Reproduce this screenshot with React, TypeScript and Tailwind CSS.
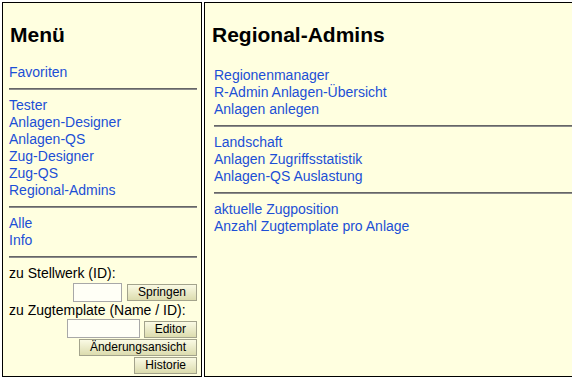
const leftGroups = [
  ['Favoriten'],
  ['Tester', 'Anlagen-Designer', 'Anlagen-QS', 'Zug-Designer', 'Zug-QS', 'Regional-Admins'],
  ['Alle', 'Info'],
];

const rightGroups = [
  ['Regionenmanager', 'R-Admin Anlagen-Übersicht', 'Anlagen anlegen'],
  ['Landschaft', 'Anlagen Zugriffsstatistik', 'Anlagen-QS Auslastung'],
  ['aktuelle Zugposition', 'Anzahl Zugtemplate pro Anlage'],
];

function Rule() {
  return <hr className="my-[7px] h-0 border-0 border-t border-b border-t-[#666] border-b-[#8c8c8c]" />;
}

function LinkGroup({ links }: { links: string[] }) {
  return (
    <div className="flex flex-col">
      {links.map((l) => (
        <a key={l} href="#" className="block h-[17px] leading-[17px] text-[#1c4fd6] no-underline">
          {l}
        </a>
      ))}
    </div>
  );
}

function Btn({ label }: { label: string }) {
  return (
    <button
      type="button"
      className="h-[17px] border border-[#a3a38c] bg-gradient-to-b from-[#fafae4] to-[#dcdcae] px-[10px] text-[12px] leading-[15px] text-black"
    >
      {label}
    </button>
  );
}

function Field({ w }: { w: string }) {
  return <input type="text" className={`h-[19px] border border-[#a8a8a8] bg-[#fffff6] ${w}`} />;
}

export default function App() {
  return (
    <div
      className="flex h-[378px] w-screen gap-[2px] overflow-hidden bg-white pl-[2px] pt-[2px] text-[14px] text-black"
      style={{ fontFamily: '"Liberation Sans", Arial, sans-serif' }}
    >
      <div className="flex h-[375px] w-[200px] flex-none flex-col border border-black bg-[#ffffe0] pl-[6px] pr-[4px]">
        <h2 className="mt-[20px] mb-[17px] pl-[1px] text-[21px] font-bold leading-[24px]">Menü</h2>
        {leftGroups.map((g, i) => (
          <div key={i}>
            <LinkGroup links={g} />
            <Rule />
          </div>
        ))}
        <div className="flex flex-col">
          <div className="h-[17px] leading-[17px]">zu Stellwerk (ID):</div>
          <div className="flex h-[20px] items-center justify-end gap-[5px]">
            <Field w="w-[49px]" />
            <Btn label="Springen" />
          </div>
          <div className="h-[17px] leading-[17px]">zu Zugtemplate (Name / ID):</div>
          <div className="flex h-[19px] items-end justify-end gap-[4px]">
            <Field w="w-[73px]" />
            <Btn label="Editor" />
          </div>
          <div className="mt-[1px] flex justify-end">
            <Btn label="Änderungsansicht" />
          </div>
          <div className="mt-[1px] flex justify-end">
            <Btn label="Historie" />
          </div>
        </div>
      </div>

      <div className="flex h-[375px] w-[420px] flex-none flex-col border border-black bg-[#ffffe0] pl-[7px]">
        <h2 className="mt-[20px] mb-[20px] text-[21px] font-bold leading-[24px]">Regional-Admins</h2>
        <div className="ml-[2px]">
          {rightGroups.map((g, i) => (
            <div key={i}>
              <LinkGroup links={g} />
              {i < rightGroups.length - 1 && <Rule />}
            </div>
          ))}
        </div>
      </div>
    </div>
  );
}
